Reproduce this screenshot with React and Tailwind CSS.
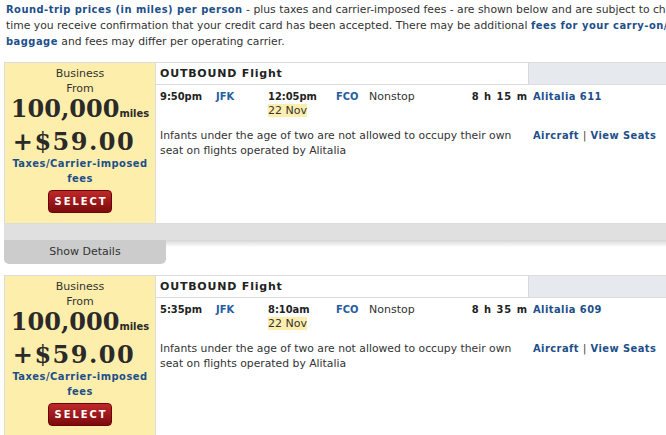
import React from "react";

const SANS = "font-['DejaVu_Sans',sans-serif]";
const BOLD = "font-['DejaVu_Sans_Condensed','DejaVu_Sans',sans-serif] font-bold";

function PricePanel() {
  return (
    <div className="w-[151px] shrink-0 bg-[#feeeab] border-r border-[#dcdcdc] flex flex-col items-center pt-[3px] text-[#333]">
      <div className="text-[11px] leading-[15px]">Business</div>
      <div className="text-[11px] leading-[15px]">From</div>
      <div className="flex items-baseline leading-[26px] text-[#2a2a2a]">
        <span className="font-['DejaVu_Serif',serif] font-bold text-[24px]">100,000</span>
        <span className={`${BOLD} text-[11px]`}>miles</span>
      </div>
      <div className="mt-[2px] mr-[12px] leading-[26px] font-['DejaVu_Serif',serif] font-bold text-[24px] tracking-[1.5px] text-[#2a2a2a]">
        +$59.00
      </div>
      <div className={`mt-[1px] text-[11px] leading-[15px] ${BOLD} tracking-[0.5px] text-[#1d4f8a] text-center`}>
        Taxes/Carrier-imposed
        <br />
        fees
      </div>
      <button className={`mt-[4px] w-[64px] h-[23px] rounded-[4px] border border-[#6b0505] bg-gradient-to-b from-[#c0282a] to-[#7c0a0c] text-white text-[11px] ${BOLD} tracking-[2px] leading-none flex items-center justify-center pl-[2px]`}>
        SELECT
      </button>
    </div>
  );
}

function FlightCard({ dep, arr, dur, flight }) {
  return (
    <div className="w-[720px] h-[162px] border border-[#dcdcdc] flex bg-white">
      <PricePanel />
      <div className="flex-1 flex flex-col">
        <div className="flex h-[22px] border-b border-[#dcdcdc]">
          <div className="w-[372px] pl-[4px] text-[11px] font-bold tracking-[0.8px] leading-[21px] text-[#222]">
            OUTBOUND Flight
          </div>
          <div className="flex-1 bg-[#e6e9ed] border-l border-[#d6d9dd]" />
        </div>
        <div className="flex">
          <div className="w-[372px] pl-[4px] pt-[5px]">
            <div className="flex text-[11px] leading-[14px]">
              <div className={`w-[56px] ${BOLD} text-[#222]`}>{dep}</div>
              <div className={`w-[52px] ${BOLD} text-[#245ca0]`}>JFK</div>
              <div className="w-[68px]">
                <div className={`${BOLD} text-[#222]`}>{arr}</div>
                <div>
                  <span className="bg-[#fdeeae] text-[#333]">22 Nov</span>
                </div>
              </div>
              <div className={`w-[33px] ${BOLD} text-[#245ca0]`}>FCO</div>
              <div className="w-[80px] text-[#333]">Nonstop</div>
              <div className={`w-[79px] text-right ${BOLD} text-[#222] tracking-[1px]`}>{dur}</div>
            </div>
            <div className="mt-[10px] text-[10.8px] leading-[15px] text-[#333] whitespace-nowrap">
              Infants under the age of two are not allowed to occupy their own
              <br />
              seat on flights operated by Alitalia
            </div>
          </div>
          <div className={`flex-1 pl-[5px] pt-[5px] text-[11px] leading-[14px] ${BOLD} tracking-[0.45px] text-[#1d4f8a]`}>
            <div>{flight}</div>
            <div className="mt-[24px] leading-[15px]">
              Aircraft <span className="font-normal text-[#333]">|</span> View Seats
            </div>
          </div>
        </div>
      </div>
    </div>
  );
}

function ShowDetails() {
  return (
    <div className="w-[720px]">
      <div className="h-[16px] bg-[#e0e0e0]" />
      <div className="flex">
        <div className="w-[162px] h-[24px] bg-[#cccccc] rounded-b-[5px] text-[11px] leading-[24px] text-center text-[#333]">
          Show Details
        </div>
        <div className="flex-1 h-[7px] bg-gradient-to-b from-[#d6d6d6] to-white" />
      </div>
    </div>
  );
}

export default function App() {
  return (
    <div className={`w-[666px] h-[435px] overflow-hidden bg-white ${SANS}`}>
      <div className="pl-[6px] pt-[2px] text-[10.8px] leading-[16px] text-[#333] whitespace-nowrap">
        <div>
          <span className={`${BOLD} text-[11px] text-[#1d4f8a] tracking-[0.5px]`}>Round-trip prices (in miles) per person</span>
          {" "}- plus taxes and carrier-imposed fees - are shown below and are subject to change
        </div>
        <div>
          time you receive confirmation that your credit card has been accepted. There may be additional{" "}
          <span className={`${BOLD} text-[11px] text-[#1d4f8a] tracking-[0.5px]`}>fees for your carry-on/</span>
        </div>
        <div>
          <span className={`${BOLD} text-[11px] text-[#1d4f8a] tracking-[0.5px]`}>baggage</span> and fees may differ per operating carrier.
        </div>
      </div>
      <div className="pl-[4px] mt-[12px]">
        <FlightCard dep="9:50pm" arr="12:05pm" dur="8 h 15 m" flight="Alitalia 611" />
        <ShowDetails />
        <div className="h-[11px]" />
        <FlightCard dep="5:35pm" arr="8:10am" dur="8 h 35 m" flight="Alitalia 609" />
      </div>
    </div>
  );
}
